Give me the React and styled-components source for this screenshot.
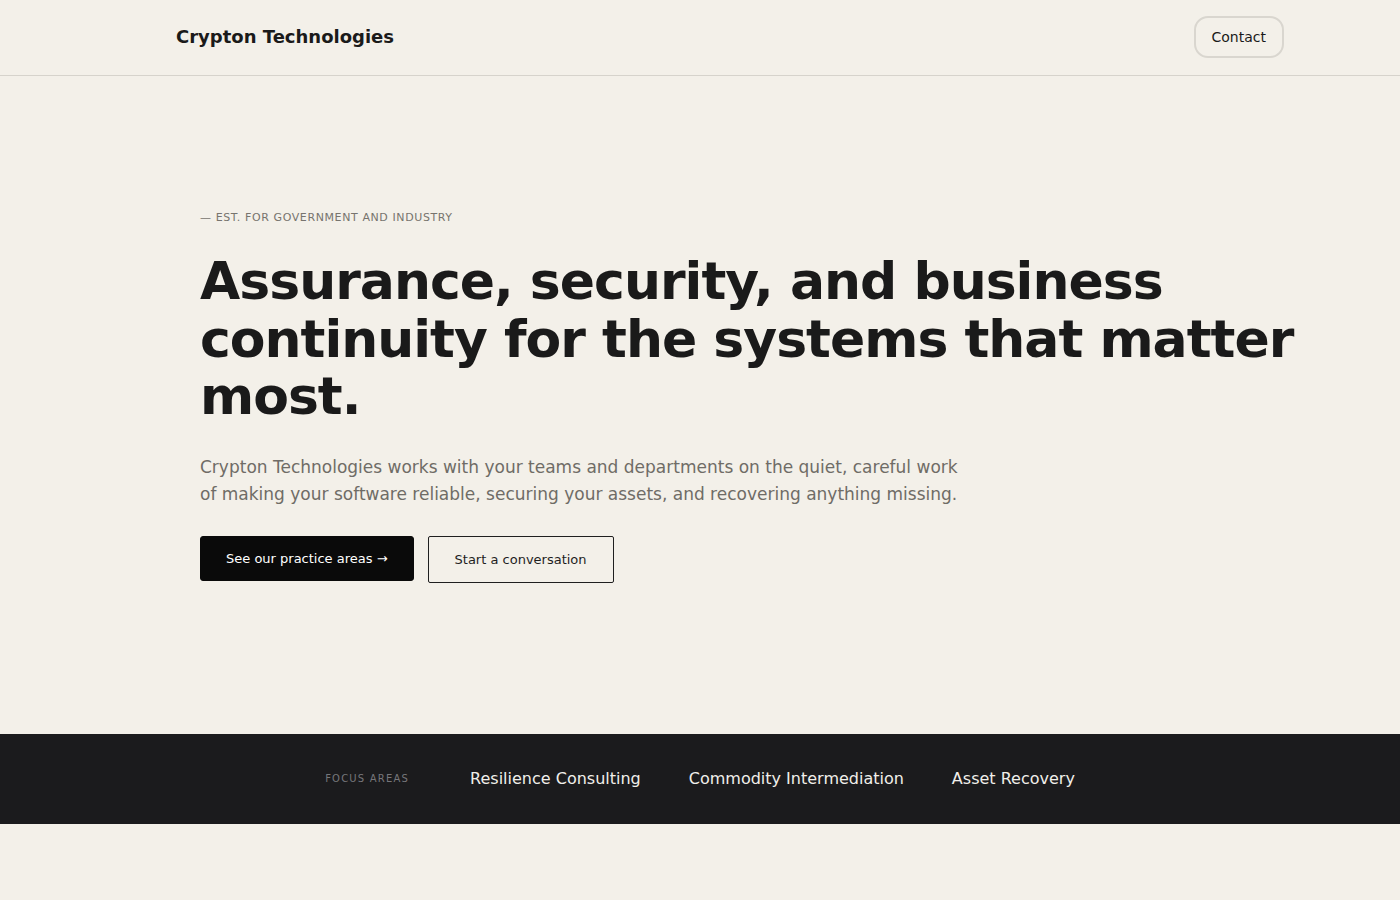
import React from 'react'
import styled, { createGlobalStyle } from 'styled-components'

/* ------------------------------ Global Styles ------------------------------ */
const GlobalStyle = createGlobalStyle`
  * { box-sizing: border-box; }
  html, body {
    margin: 0;
    padding: 0;
    background: #f3f0e9;
    font-family: "DejaVu Sans", "Noto Sans", sans-serif;
    color: #1a1a1a;
  }
`

/* --------------------------- Styled Components ---------------------------- */
const Page = styled.div`
  min-height: 900px;
  background: #f3f0e9;
`

const Header = styled.header`
  height: 76px;
  border-bottom: 1px solid #d6d3cc;
  display: flex;
  align-items: center;
  justify-content: space-between;
  padding: 0 116px 2px 176px;
`

const Logo = styled.div`
  font-size: 18px;
  font-weight: 700;
  color: #1a1a1a;
`

const ContactButton = styled.button`
  height: 42px;
  padding: 0 16px;
  border: 2px solid #d9d6cf;
  border-radius: 14px;
  background: transparent;
  font-family: inherit;
  font-size: 14px;
  color: #1a1a1a;
  cursor: pointer;
`

const Hero = styled.section`
  padding: 135px 60px 151px 200px;
`

const Eyebrow = styled.div`
  font-size: 11px;
  letter-spacing: 0.6px;
  color: #77746e;
  text-transform: uppercase;
  margin-bottom: 29px;
`

const Title = styled.h1`
  margin: 0 0 28px;
  font-size: 52px;
  line-height: 57.5px;
  font-weight: 700;
  letter-spacing: -1px;
  color: #1a1a1a;
  max-width: 1120px;
`

const Lead = styled.p`
  margin: 0 0 28px;
  font-size: 17px;
  line-height: 27px;
  color: #6f6c66;
  max-width: 770px;
`

const Actions = styled.div`
  display: flex;
  gap: 14px;
  align-items: flex-start;
`

const ActionButton = styled.button`
  height: ${p => (p.$primary ? '45px' : '47px')};
  padding: ${p => (p.$primary ? '0 25px' : '0 26px')};
  font-family: inherit;
  font-size: 13px;
  border-radius: ${p => (p.$primary ? '3px' : '2px')};
  border: 1px solid ${p => (p.$primary ? '#0a0a0a' : '#1f1f1f')};
  background: ${p => (p.$primary ? '#0a0a0a' : 'transparent')};
  color: ${p => (p.$primary ? '#ffffff' : '#1f1f1f')};
  cursor: pointer;
`

const Band = styled.section`
  height: 90px;
  background: #1b1b1d;
  display: flex;
  align-items: center;
  justify-content: center;
  gap: 48px;
`

const BandLabel = styled.span`
  font-size: 10px;
  letter-spacing: 1.2px;
  color: #76767a;
  text-transform: uppercase;
  margin-right: 13px;
`

const BandItem = styled.span`
  font-size: 16px;
  color: #f1efea;
`

/* ------------------------------- Component -------------------------------- */
const focusAreas = ['Resilience Consulting', 'Commodity Intermediation', 'Asset Recovery']

const App = () => (
  <Page>
    <GlobalStyle />
    <Header>
      <Logo>Crypton Technologies</Logo>
      <ContactButton>Contact</ContactButton>
    </Header>
    <Hero>
      <Eyebrow>— Est. for government and industry</Eyebrow>
      <Title>
        Assurance, security, and business continuity for the systems that matter most.
      </Title>
      <Lead>
        Crypton Technologies works with your teams and departments on the quiet, careful work
        of making your software reliable, securing your assets, and recovering anything missing.
      </Lead>
      <Actions>
        <ActionButton $primary>See our practice areas →</ActionButton>
        <ActionButton>Start a conversation</ActionButton>
      </Actions>
    </Hero>
    <Band>
      <BandLabel>Focus areas</BandLabel>
      {focusAreas.map(area => <BandItem key={area}>{area}</BandItem>)}
    </Band>
  </Page>
)

export default App
